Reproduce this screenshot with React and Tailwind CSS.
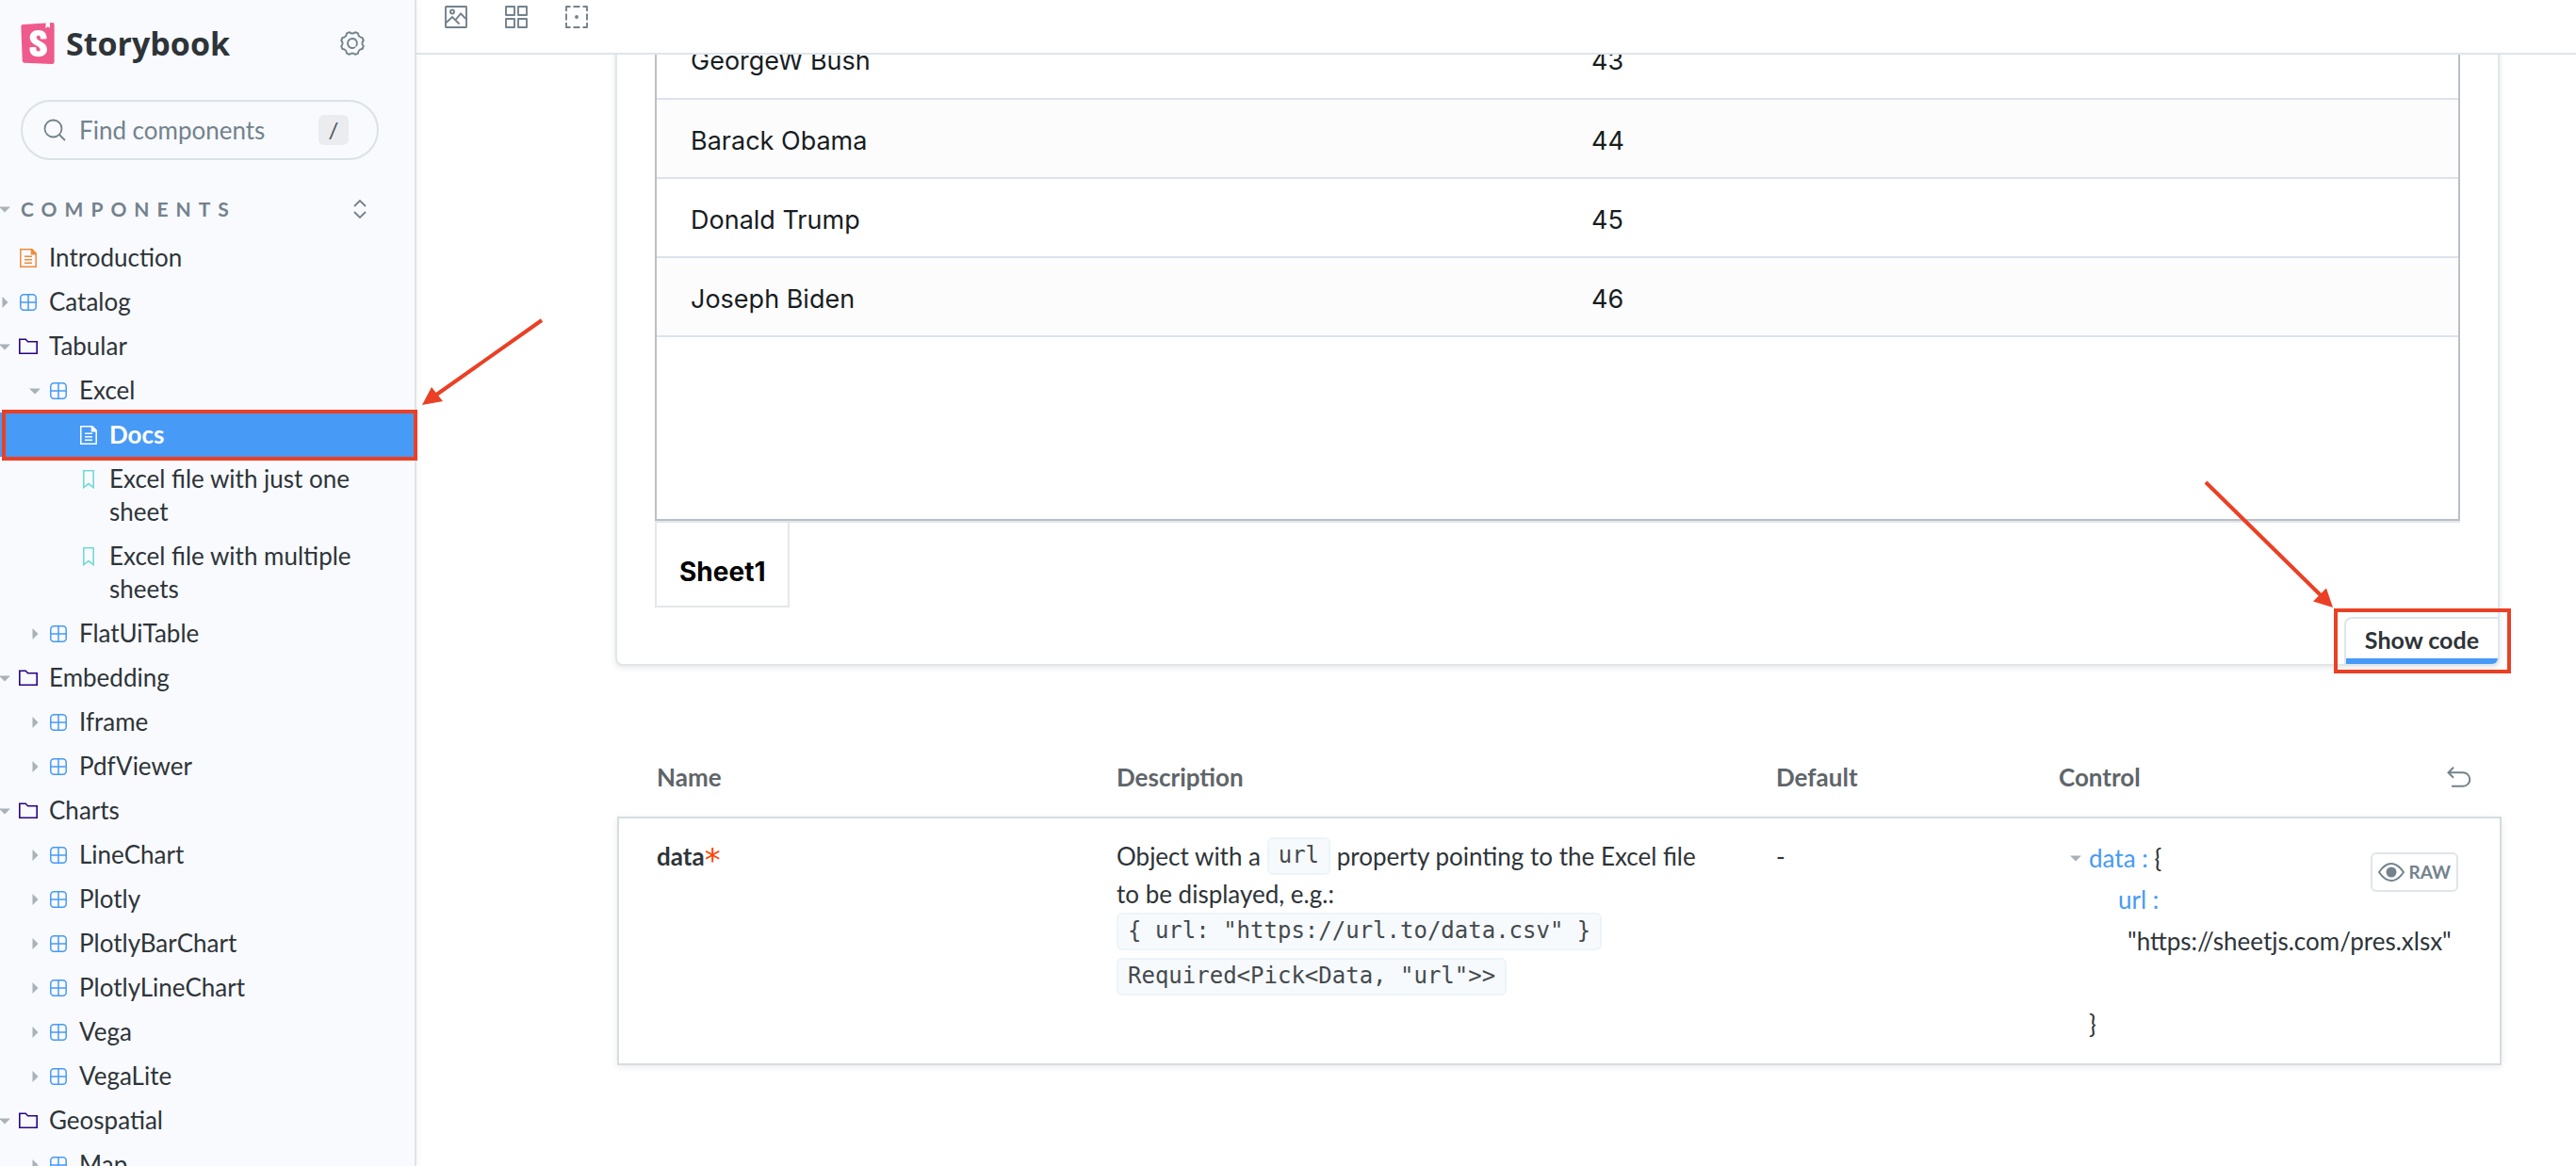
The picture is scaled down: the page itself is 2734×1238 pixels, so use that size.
import React from "react";
import { SiStorybook } from "react-icons/si";

const BLUE = "#479af6";

function DocIcon({ color }) {
  return (
    <svg viewBox="0 0 18 20" className="h-5 w-[18px] shrink-0" fill="none" stroke={color} strokeWidth="1.5" aria-hidden="true">
      <path d="M.8.8H13l4.2 4.2v14.2H.8z" />
      <path d="M12.5.8v5h4.7" fill={color} />
      <path d="M5 8.2h8M5 11.8h8M5 15.2h8" />
    </svg>
  );
}

function ComponentIcon() {
  return (
    <svg viewBox="0 0 18 18" className="size-[18px] shrink-0" fill="none" stroke={BLUE} strokeWidth="1.5" aria-hidden="true">
      <rect x=".8" y=".8" width="16.4" height="16.4" rx="3.5" />
      <path d="M9 .8v16.4M.8 9h16.4" />
    </svg>
  );
}

function FolderIcon() {
  return (
    <svg viewBox="0 0 20 18" className="h-[18px] w-5 shrink-0" fill="none" stroke="#2a0481" strokeWidth="1.6" aria-hidden="true">
      <path d="M.8 1.3h6.4l2.4 2.4h9.600v12.600H.8z" />
    </svg>
  );
}

function BookmarkIcon() {
  return (
    <svg viewBox="0 0 12 20" className="h-5 w-[18px] shrink-0" fill="none" stroke="#72dad6" strokeWidth="1.6" aria-hidden="true">
      <path d="M.8.8h10.4v17.8L6 14.5.8 18.6z" />
    </svg>
  );
}

function Caret({ open }) {
  return (
    <svg viewBox="0 0 12 12" className="size-3 shrink-0" fill="#a9b2b9" aria-hidden="true">
      {open ? <path d="M0 3.5h12L6 9.500z" /> : <path d="M3.5 0v12l6-6z" />}
    </svg>
  );
}

const tree = [
  { label: "Introduction", level: 0, icon: "doc" },
  { label: "Catalog", level: 0, icon: "component" },
  { label: "Tabular", level: 0, icon: "folder" },
  { label: "Excel", level: 1, icon: "component", open: true },
  { label: "Docs", level: 2, icon: "doc", selected: true },
  { label: "Excel file with just one sheet", level: 2, icon: "story" },
  { label: "Excel file with multiple sheets", level: 2, icon: "story" },
  { label: "FlatUiTable", level: 1, icon: "component" },
  { label: "Embedding", level: 0, icon: "folder" },
  { label: "Iframe", level: 1, icon: "component" },
  { label: "PdfViewer", level: 1, icon: "component" },
  { label: "Charts", level: 0, icon: "folder" },
  { label: "LineChart", level: 1, icon: "component" },
  { label: "Plotly", level: 1, icon: "component" },
  { label: "PlotlyBarChart", level: 1, icon: "component" },
  { label: "PlotlyLineChart", level: 1, icon: "component" },
  { label: "Vega", level: 1, icon: "component" },
  { label: "VegaLite", level: 1, icon: "component" },
  { label: "Geospatial", level: 0, icon: "folder" },
  { label: "Map", level: 1, icon: "component" },
];

const indents = ["pl-0", "pl-8", "pl-16"];

function TreeItem({ item }) {
  const branch = item.icon === "component" || item.icon === "folder";
  return (
    <li className="relative">
      <a
        href="#"
        className={`flex items-start py-1.5 pr-14 leading-[35px] ${indents[item.level]} ${
          item.selected ? "bg-[#479af6] font-bold text-white" : "text-[#2e3438]"
        }`}
      >
        <span className="flex h-[35px] w-[52px] shrink-0 items-center gap-[9px]">
          <span className="-ml-px flex w-3">{branch && <Caret open={item.open || item.icon === "folder"} />}</span>
          <span className="flex w-5 justify-center">
            {item.icon === "doc" && <DocIcon color={item.selected ? "#ffffff" : "#f08a3c"} />}
            {item.icon === "component" && <ComponentIcon />}
            {item.icon === "folder" && <FolderIcon />}
            {item.icon === "story" && <BookmarkIcon />}
          </span>
        </span>
        <span>{item.label}</span>
      </a>
      {item.selected && (
        <span className="pointer-events-none absolute -top-[3px] -right-[3px] -bottom-1 left-0.5 z-20 border-4 border-[#ea4025]">
          <svg
            viewBox="0 0 132 96"
            className="absolute -top-[101px] left-[440px] h-24 w-[132px]"
            aria-hidden="true"
          >
            <path d="M129 2 13 84" stroke="#ea4025" strokeWidth="4" />
            <path d="M2 92 12 73 24 88z" fill="#ea4025" />
          </svg>
        </span>
      )}
    </li>
  );
}

function Sidebar() {
  return (
    <nav className="relative z-10 h-full w-[442px] shrink-0 border-r-2 border-[#dfe3e8] bg-[#f8fafe] shadow-[0_0_8px_rgba(0,0,0,0.06)]">
      <div className="flex items-center pt-6 pr-[52px] pl-[18px]">
        <a href="#" className="flex h-11 items-center gap-2 font-['Open_Sans',sans-serif] text-[34px] font-bold text-[#2e3438]">
          <span className="flex bg-[linear-gradient(white,white)] bg-[length:60%_70%] bg-center bg-no-repeat">
            <SiStorybook className="size-11 text-[#ef5a8c]" aria-hidden="true" />
          </span>
          Storybook
        </a>
        <button type="button" aria-label="Settings" className="ml-auto">
          <svg viewBox="0 0 28 28" className="size-7" fill="none" stroke="#73828c" strokeWidth="1.900" strokeLinejoin="round" strokeLinecap="round" aria-hidden="true">
            <path d="M11 2.200Q12.500 3.500 14 3.500T17 2.200L20 3.400Q20.200 5.500 21.300 6.600T24.500 8L25.800 11Q24.400 12.500 24.400 14T25.800 17L24.500 20Q22.400 20.200 21.300 21.300T20 24.600L17 25.800Q15.500 24.500 14 24.500T11 25.800L8 24.600Q7.800 22.400 6.700 21.300T3.500 20L2.200 17Q3.600 15.500 3.600 14T2.200 11L3.500 8Q5.600 7.800 6.700 6.600T8 3.400z" />
            <path d="M16.500 18.300A5 5 0 1 1 18.300 16.500" />
          </svg>
        </button>
      </div>

      <div className="pt-[38px] pr-[38px] pl-[22px]">
        <label className="flex h-16 items-center rounded-full border-2 border-[#dae2e7] pr-[30px] pl-[22px]">
          <svg viewBox="0 0 24 24" className="size-6 shrink-0" fill="none" stroke="#73828c" strokeWidth="1.800" aria-hidden="true">
            <circle cx="10.500" cy="10.500" r="9" />
            <path d="m17 17 6 6" />
          </svg>
          <input
            type="text"
            aria-label="Find components"
            placeholder="Find components"
            className="ml-3.5 w-full min-w-0 bg-transparent text-[26px] text-[#73828c] outline-none placeholder:text-[#73828c]"
          />
          <kbd className="flex h-8 w-8 shrink-0 items-center justify-center rounded-md bg-[#ebecf0] font-['Lato'] text-2xl text-[#4c5459]">/</kbd>
        </label>
      </div>

      <div className="flex h-[80px] items-center pt-6 pr-[51px]">
        <button type="button" className="flex items-center text-[21px] font-bold tracking-[8px] text-[#73828c]">
          <span className="-ml-px flex w-[23px]"><Caret open /></span>
          COMPONENTS
        </button>
        <button type="button" aria-label="Expand all" className="ml-auto">
          <svg viewBox="0 0 14 20" className="h-5 w-3.5" fill="none" stroke="#73828c" strokeWidth="1.800" aria-hidden="true">
            <path d="m1 7 6-6 6 6M1 13l6 6 6-6" />
          </svg>
        </button>
      </div>

      <ul>
        {tree.map((item) => (
          <TreeItem key={item.label} item={item} />
        ))}
      </ul>
    </nav>
  );
}

function Toolbar() {
  const cls = "size-6";
  return (
    <div className="flex h-[58px] shrink-0 items-start gap-10 border-b-2 border-[#dfe5ea] bg-white pt-1.5 pl-[30px]">
      <button type="button" aria-label="Change background">
        <svg viewBox="0 0 24 24" className={cls} fill="none" stroke="#73828c" strokeWidth="1.900" aria-hidden="true">
          <rect x="1" y="1" width="22" height="22" rx=".5" />
          <circle cx="8" cy="6.500" r="2" />
          <path d="m1 18.500 7-6.500 7.500 7.500M11.500 15 17 8.500l6 6" />
        </svg>
      </button>
      <button type="button" aria-label="Apply a grid">
        <svg viewBox="0 0 24 24" className={cls} fill="none" stroke="#73828c" strokeWidth="1.900" strokeLinejoin="round" aria-hidden="true">
          <path d="M1 1h9v9H1zM14 1h9v9h-9zM1 14h9v9H1zM14 14h9v9h-9z" />
        </svg>
      </button>
      <button type="button" aria-label="Enable outline">
        <svg viewBox="0 0 24 24" className={cls} fill="none" stroke="#73828c" strokeWidth="1.900" strokeLinejoin="round" aria-hidden="true">
          <path d="M1 6V1h4.500M8.500 1h7M18.500 1H23v5M23 8.500v7M23 18v5h-4.500M15.500 23h-7M5.500 23H1v-5M1 15.500v-7" />
          <circle cx="12" cy="12" r="1" fill="#73828c" />
        </svg>
      </button>
    </div>
  );
}

const presidents = [
  ["GeorgeW Bush", 43],
  ["Barack Obama", 44],
  ["Donald Trump", 45],
  ["Joseph Biden", 46],
];

function Preview() {
  return (
    <section className="relative rounded-b-lg border-2 border-t-0 border-[#e1e6ea] bg-white px-10 pb-[60px] font-['Inter',sans-serif] shadow-[0_2px_6px_rgba(0,0,0,0.10)]">
      <div className="border-x-2 border-b-2 border-[#babfc7] bg-white pb-[193px]">
        <table className="-mt-[37px] w-full table-fixed text-[27px] text-[#181d1f]">
          <tbody>
            {presidents.map(([name, index]) => (
              <tr key={name} className="h-[84px] border-b-2 border-[#dde2eb] even:bg-[#fcfcfc]">
                <td className="pt-1.5 pl-9">{name}</td>
                <td className="pt-1.5 pl-9">{index}</td>
              </tr>
            ))}
          </tbody>
        </table>
      </div>
      <div className="flex border-t-2 border-[#e2e6ea]">
        <button type="button" className="h-[90px] border-2 border-t-0 border-[#e5e7eb] px-6 pt-4 text-[28px] font-bold text-black">
          Sheet1
        </button>
      </div>
      <div className="absolute right-0 bottom-0">
        <button
          type="button"
          className="h-[50px] rounded-tl-lg rounded-br-md border-t-2 border-l-2 border-[#dfe5ea] bg-[linear-gradient(to_top,#479af6_6px,white_6px)] px-5 pb-0.5 font-['Lato',sans-serif] text-[25px] font-bold text-[#2e3438]"
        >
          Show code
        </button>
        <span className="pointer-events-none absolute -top-[9px] -right-[14px] -bottom-[10px] -left-[11px] border-4 border-[#ea4025]">
          <svg viewBox="0 0 140 138" className="absolute -top-[141px] -left-[143px] h-[138px] w-[140px]" aria-hidden="true">
            <path d="m3 3 122 120" stroke="#ea4025" strokeWidth="4" />
            <path d="M138 136 117 129.500 131 115.500z" fill="#ea4025" />
          </svg>
        </span>
      </div>
    </section>
  );
}

const code =
  "inline-block h-10 rounded-md border-2 border-[#ecf4f9] bg-[#f7fafc] px-2.5 align-top font-['DejaVu_Sans_Mono',monospace] text-2xl leading-[34px] text-[#444a4e]";

function ArgsTable() {
  return (
    <section className="-mr-0.5 ml-0.5 mt-[90px]">
      <table className="w-full table-fixed">
        <colgroup>
          <col className="w-[26.5%]" />
          <col className="w-[35%]" />
          <col className="w-[15%]" />
          <col />
        </colgroup>
        <thead>
          <tr className="h-[70px] text-left align-top leading-[56px] text-[#5f656a]">
            <th className="pl-[42px]">Name</th>
            <th>Description</th>
            <th>Default</th>
            <th>
              <span className="flex items-center justify-between pr-8">
                Control
                <button type="button" aria-label="Reset controls">
                  <svg viewBox="0 0 26 22" className="h-[22px] w-[26px]" fill="none" stroke="#73828c" strokeWidth="2" aria-hidden="true">
                    <path d="M7 .8 1.500 6.200 7 11.800M1.500 6.200H17a7.300 7.300 0 0 1 0 14.600H5" />
                  </svg>
                </button>
              </span>
            </th>
          </tr>
        </thead>
        <tbody className="shadow-[0_2px_8px_rgba(0,0,0,0.08)] outline-2 -outline-offset-2 outline-[#d6dce0]">
          <tr className="h-[264px] align-top leading-10 text-[#2e3438]">
            <td className="pt-[22px] pl-[42px] font-bold">
              data<span className="align-sub font-['DejaVu_Sans',sans-serif] text-[34px] leading-none font-normal text-[#ff4400]" title="Required">*</span>
            </td>
            <td className="pt-[22px] pr-10">
              Object with a <code className={code}>url</code> property pointing to the Excel file
              <br />
              to be displayed, e.g.:
              <br />
              <code className={code}>{'{ url: "https://url.to/data.csv" }'}</code>
              <div className="mt-2">
                <code className={code}>{'Required<Pick<Data, "url">>'}</code>
              </div>
            </td>
            <td className="pt-[22px]">-</td>
            <td className="relative pt-[22px]">
              <div className="pl-3 leading-11 text-[#2e3438]">
                <div className="flex items-center">
                  <span className="flex w-5"><Caret open /></span>
                  <span><span className="text-[#479af6]">data :</span> {"{"}</span>
                </div>
                <div className="pl-[51px] text-[#479af6]">url :</div>
                <div className="pl-[61px]">"https://sheetjs.com/pres.xlsx"</div>
                <div className="mt-11 pl-5">{"}"}</div>
              </div>
              <button
                type="button"
                className="absolute top-[38px] right-[46px] flex h-[42px] items-center gap-[5px] rounded-md border-2 border-[#dfe5ea] bg-white px-1.5 text-[19px] font-bold text-[#73828c]"
              >
                <svg viewBox="0 0 28 20" className="h-5 w-7" fill="none" stroke="#73828c" strokeWidth="2" aria-hidden="true">
                  <path d="M1 10Q7 1 14 1t13 9q-6 9-13 9T1 10z" />
                  <circle cx="14" cy="10" r="4.500" fill="#73828c" />
                </svg>
                RAW
              </button>
            </td>
          </tr>
        </tbody>
      </table>
    </section>
  );
}

export default function App() {
  return (
    <div className="flex h-screen overflow-hidden bg-white font-['Lato',sans-serif] text-[26px]">
      <Sidebar />
      <div className="flex min-w-0 flex-1 flex-col">
        <Toolbar />
        <main className="min-h-0 flex-1 overflow-hidden pr-[81px] pl-[211px]">
          <Preview />
          <ArgsTable />
        </main>
      </div>
    </div>
  );
}
